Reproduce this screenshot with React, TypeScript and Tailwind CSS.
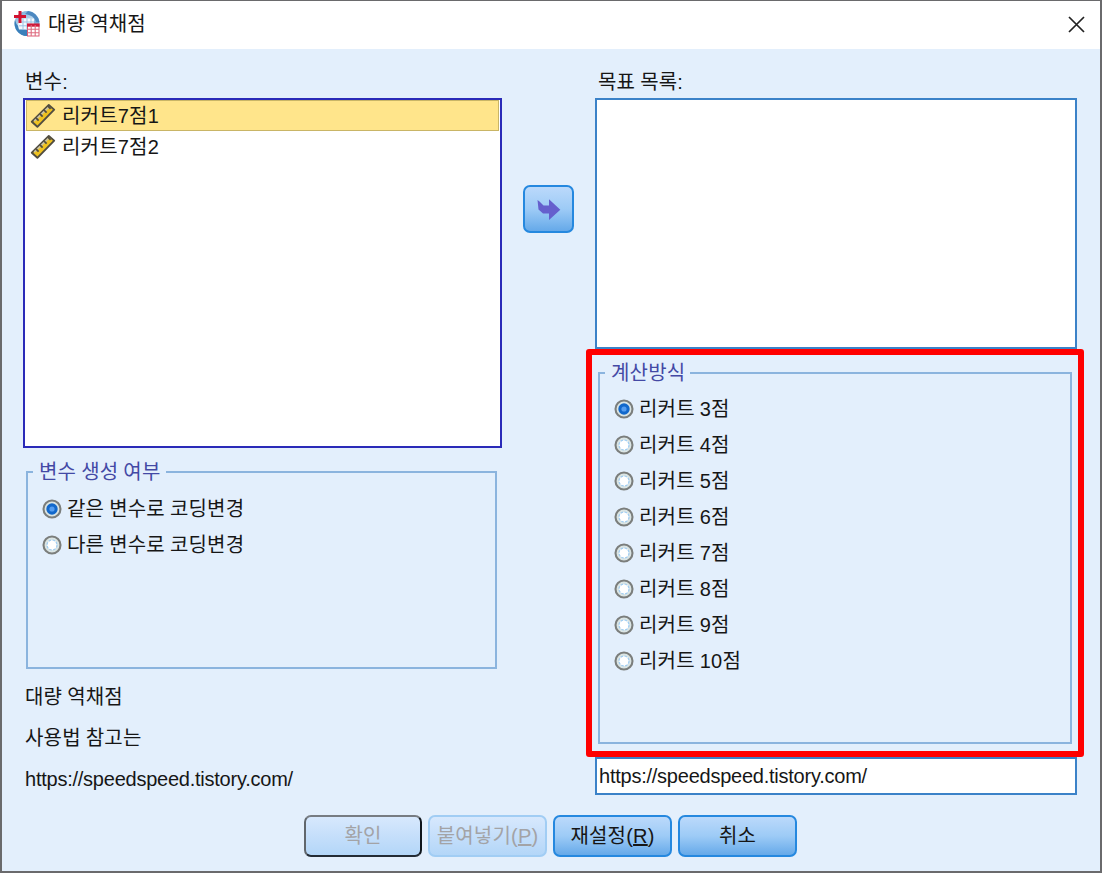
import type { ReactNode } from 'react'

const variables = ['리커트7점1', '리커트7점2']
const targets = ['같은 변수로 코딩변경', '다른 변수로 코딩변경']
const scales = [3, 4, 5, 6, 7, 8, 9, 10]

function AppIcon() {
  return (
    <svg className="h-[28px] w-[28px] shrink-0" viewBox="0 0 28 28">
      <defs>
        <linearGradient id="globe" x1="0" y1="0" x2="0.6" y2="1">
          <stop offset="0" stopColor="#6fa3d3" />
          <stop offset="0.5" stopColor="#b4d2ea" />
          <stop offset="1" stopColor="#2f78b8" />
        </linearGradient>
      </defs>
      <circle cx="14" cy="13.5" r="12.5" fill="url(#globe)" />
      <path d="M15 1A12.5 12.5 0 0 1 26.4 12H23Q21 5 12 4Z" fill="#4c88c0" />
      <path d="M2 10Q4 19 14 20V26A12.5 12.5 0 0 1 2 10Z" fill="#3a80bb" />
      <path d="M7 8.5H21V19.5H6Q4 14 7 8.5Z" fill="#f4f9fd" />
      <path d="M6 12H21M6 15.8H21M10 8.5V19.5M14 8.5V19.5M18 8.5V19.5" stroke="#9dc3e3" strokeWidth="1" />
      <path d="M7 1V13M1 6.5H13" stroke="#d3112f" strokeWidth="3" />
      <rect x="14.5" y="14" width="11.5" height="12" fill="#fff" stroke="#dc5a72" strokeWidth="1" />
      <path d="M14 15.2H26.5" stroke="#cf1a3a" strokeWidth="3" />
      <path d="M14 19.3H26M14 22.8H26M18.2 15V26M22.2 15V26" stroke="#de6c80" strokeWidth="1.1" />
    </svg>
  )
}

function RulerIcon() {
  return (
    <svg className="h-[26px] w-[26px] shrink-0" viewBox="0 0 26 26">
      <path d="M1.8 18.7L18.8 2L24.2 6.6L7.4 23.8Z" fill="#efc21f" stroke="#514d40" strokeWidth="1.9" strokeLinejoin="round" />
      <path d="M4.2 18.2L19 3.9" stroke="#c9c3a4" strokeWidth="1.6" />
      <path d="M6 14.9L8.6 17.6M10 10.9L12.6 13.6M14 7L16.6 9.7M18 3.2L20.6 5.8" stroke="#514d40" strokeWidth="1.7" />
    </svg>
  )
}

function Radio({ checked, children }: { checked?: boolean; children: ReactNode }) {
  return (
    <label className="flex h-9 items-center gap-[5px] whitespace-pre">
      <svg className="h-5 w-5 shrink-0" viewBox="0 0 20 20">
        <circle cx="10" cy="10" r="8.5" fill="#dbe5e4" stroke="#7b7e7c" strokeWidth="2.1" />
        {checked ? (
          <>
            <circle cx="10" cy="10" r="5.7" fill="#1268cb" />
            <circle cx="10" cy="10" r="2.6" fill="#559df0" />
          </>
        ) : (
          <circle cx="10" cy="10" r="5" fill="#fff" stroke="#9ccbf2" strokeWidth="1.2" strokeDasharray="2.6 1.3" />
        )}
      </svg>
      <span>{children}</span>
    </label>
  )
}

function Group({ title, className, children }: { title: string; className: string; children: ReactNode }) {
  return (
    <fieldset className={`border-2 border-[#8bb4de] ${className}`}>
      <legend className="ml-[5px] h-6 pl-[6px] pr-[5px] leading-[25px] text-[#4349a5]">{title}</legend>
      {children}
    </fieldset>
  )
}

export default function App() {
  return (
    <div className="relative flex h-[873px] w-[1102px] flex-col overflow-hidden border-2 border-t border-[#6a6a6c] bg-[#e3effc] font-['Liberation_Sans','Noto_Sans_CJK_KR',sans-serif] text-[20px] leading-6 tracking-[0.2px] text-[#161616] [word-spacing:-0.8px]">
      <header className="flex h-12 shrink-0 items-center bg-white pb-[2px] pl-[11px] pr-[15px]">
        <AppIcon />
        <h1 className="ml-[7px] flex-1">대량 역채점</h1>
        <svg className="h-[17px] w-[17px]" viewBox="0 0 17 17">
          <path d="M1 1L16 16M16 1L1 16" stroke="#222" strokeWidth="1.7" />
        </svg>
      </header>

      <main className="flex h-[766px] shrink-0 pl-[21px] pt-[21px]">
        <section className="flex w-[479px] flex-col">
          <p className="ml-[2px] h-7">변수:</p>
          <ul className="h-[350px] border-2 border-[#2a2ab8] bg-white px-px">
            {variables.map((name, i) => (
              <li
                key={name}
                className={
                  i === 0
                    ? 'flex h-[31px] items-center border border-[#c9b566] bg-[#ffe58b] pl-[3px]'
                    : 'flex h-[31px] items-center pl-1'
                }
              >
                <RulerIcon />
                <span className="ml-[6px]">{name}</span>
              </li>
            ))}
          </ul>
          <Group title="변수 생성 여부" className="ml-[3px] mt-3 h-[209px] w-[471px]">
            <div className="pl-[14px] pt-[7px]">
              {targets.map((t, i) => (
                <Radio key={t} checked={i === 0}>{t}</Radio>
              ))}
            </div>
          </Group>
          <div className="ml-[2px] mt-[8px] leading-[41px]">
            <p>대량 역채점</p>
            <p>사용법 참고는</p>
            <p className="tracking-[-0.24px]">https://speedspeed.tistory.com/</p>
          </div>
        </section>

        <div className="flex w-[93px] justify-center pt-[115px]">
          <button className="flex h-12 w-[51px] items-center justify-center rounded-[7px] border-2 border-[#2588df] bg-linear-to-b from-[#bbd9fb] via-[#9dcbf6] to-[#65a9e9]">
            <svg className="h-6 w-6" viewBox="0 0 24 24">
              <path d="M0.5 3L2.5 4.5L6.5 8.5H12V2.2L23.3 12.8L12 23V16.5H6L1.5 12.5Z" fill="#655fcd" />
            </svg>
          </button>
        </div>

        <section className="flex w-[482px] flex-col">
          <p className="ml-[3px] h-7">목표 목록:</p>
          <div className="h-[251px] border-2 border-[#3b82c8] bg-white" />
          <Group title="계산방식" className="ml-[3px] mt-3 h-[383px] w-[474px]">
            <div className="pl-[14px] pt-[6px]">
              {scales.map((n) => (
                <Radio key={n} checked={n === 3}>{`리커트 ${n}점`}</Radio>
              ))}
            </div>
          </Group>
          <input
            readOnly
            value="https://speedspeed.tistory.com/"
            className="mt-[13px] h-[38px] border-2 border-[#3b82c8] bg-white pl-[2px] tracking-[-0.24px] outline-none"
          />
        </section>
      </main>

      <footer className="flex gap-[6px] pl-[302px]">
        <button className="h-[42px] w-[118px] rounded-[7px] border-2 border-b-[#222b35] border-l-[#60666c] border-r-[#10161c] border-t-[#777c82] bg-linear-to-b from-[#d7e8fd] to-[#b3d6f8] text-[#a3a3a6]">
          확인
        </button>
        <button className="h-[42px] w-[119px] rounded-[7px] border-2 border-[#a1cdf4] bg-linear-to-b from-[#d7e8fd] to-[#b3d6f8] text-[#a3a3a6]">
          붙여넣기(<u>P</u>)
        </button>
        <button className="h-[42px] w-[119px] rounded-[7px] border-2 border-[#2588df] bg-linear-to-b from-[#bbd9fb] via-[#9dcbf6] to-[#65a9e9]">
          재설정(<u>R</u>)
        </button>
        <button className="h-[42px] w-[119px] rounded-[7px] border-2 border-[#2588df] bg-linear-to-b from-[#bbd9fb] via-[#9dcbf6] to-[#65a9e9]">
          취소
        </button>
      </footer>

      {/* highlight around the scale options */}
      <div className="pointer-events-none absolute left-[584px] top-[348px] h-[408px] w-[498px] rounded-[3px] border-[6px] border-[#ff0000]" />
    </div>
  )
}
